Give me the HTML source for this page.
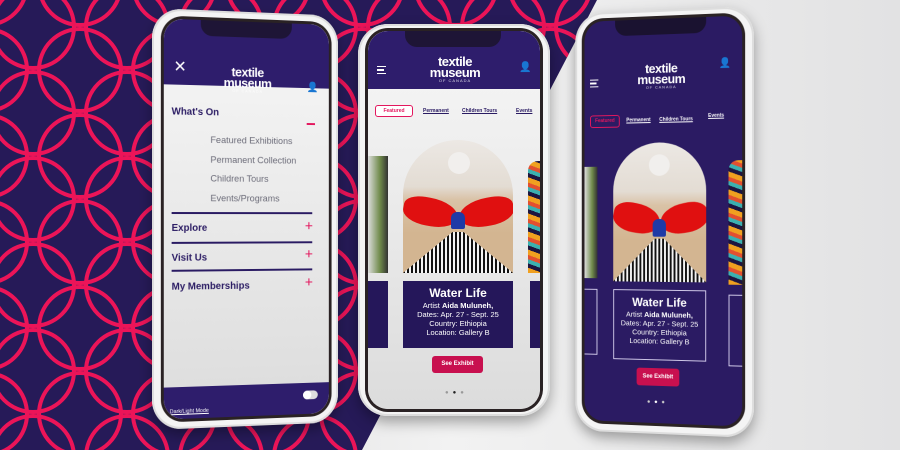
<!DOCTYPE html>
<html><head><meta charset="utf-8"><style>
*{margin:0;padding:0;box-sizing:border-box}
body{width:900px;height:450px;overflow:hidden;position:relative;font-family:"Liberation Sans",sans-serif;background:#e9e9ea}
.abs{position:absolute}
.phone{position:absolute;background:#f4f4f4;border-radius:30px;box-shadow:0 6px 14px rgba(0,0,0,.35),inset 0 0 0 2px #ddd}
.screen{position:absolute;overflow:hidden;border-radius:20px;background:linear-gradient(180deg,#f7f7f7,#dcdcdc);box-shadow:0 0 0 3px #2a2224}
.notch{position:absolute;height:16px;background:#1e1536;border-radius:0 0 12px 12px;top:0}
.logo{position:absolute;color:#fff;font-weight:bold;text-align:center;line-height:11px;font-size:13px;letter-spacing:-.5px}
.logo small{display:block;font-size:4px;font-weight:normal;letter-spacing:1px;line-height:6px;opacity:.8}
.tab{position:absolute;font-size:5px;font-weight:bold;text-decoration:underline}
.arch{position:absolute;border-radius:60px 60px 0 0;overflow:hidden;background:linear-gradient(180deg,#ece8e4 0,#e3dcd3 35%,#d9c2a6 45%,#d3b591 70%)}
.card{position:absolute;color:#fff;text-align:center;font-size:7.5px;line-height:9px}
.card b.t{display:block;font-size:12px;line-height:16px;margin-top:4px}
.btn{position:absolute;background:#c8104f;color:#fff;font-size:6px;font-weight:bold;text-align:center;border-radius:3px}
</style></head><body>
<svg class="abs" style="left:0;top:0" width="900" height="450">
<defs>
<linearGradient id="g" x1="0" x2="1"><stop offset="0" stop-color="#d4d4d6"/><stop offset=".5" stop-color="#f2f2f2"/><stop offset="1" stop-color="#e2e2e3"/></linearGradient>
<pattern id="p" width="94" height="86" patternUnits="userSpaceOnUse" x="33" y="27">
<g fill="none" stroke="#ec1458" stroke-width="4">
<circle cx="0" cy="0" r="41"/><circle cx="94" cy="0" r="41"/><circle cx="0" cy="86" r="41"/><circle cx="94" cy="86" r="41"/><circle cx="47" cy="43" r="41"/>
</g></pattern>
<clipPath id="c"><polygon points="0,0 597,0 362,450 0,450"/></clipPath>
</defs>
<rect width="900" height="450" fill="url(#g)"/>
<g clip-path="url(#c)"><rect width="900" height="450" fill="#261a58"/><rect width="900" height="450" fill="url(#p)"/></g>
</svg>

<!-- phone 1 -->
<div class="phone" style="left:152px;top:8px;width:196px;height:422px;transform:perspective(900px) rotateY(10deg);transform-origin:left center">
 <div class="screen" style="left:12px;top:10px;width:174px;height:402px">
  <div class="abs" style="left:0;top:0;width:174px;height:66px;background:#2e1d6c"></div>
  <div class="notch" style="left:38px;width:96px"></div>
  <div class="abs" style="left:10px;top:38px;color:#fff;font-size:16px">✕</div>
  <div class="logo" style="left:52px;top:46px;width:70px">textile<br>museum<small>OF CANADA</small></div>
  <div class="abs" style="left:150px;top:60px;color:#fff;font-size:10px">👤</div>
  <div class="abs" style="left:8px;top:88px;font-size:10px;font-weight:bold;color:#2a1b63">What's On</div>
  <div class="abs" style="left:150px;top:102px;width:9px;height:2px;background:#e3175e"></div>
  <div class="abs" style="left:48px;top:112px;font-size:9.5px;line-height:19.5px;color:#6b6b78">Featured Exhibitions<br>Permanent Collection<br>Children Tours<br>Events/Programs</div>
  <div class="abs" style="left:8px;top:194px;width:148px;height:1.5px;background:#2a1b63"></div>
  <div class="abs" style="left:8px;top:205px;font-size:10px;font-weight:bold;color:#2a1b63">Explore</div>
  <div class="abs" style="left:8px;top:224px;width:148px;height:1.5px;background:#2a1b63"></div>
  <div class="abs" style="left:8px;top:235px;font-size:10px;font-weight:bold;color:#2a1b63">Visit Us</div>
  <div class="abs" style="left:8px;top:252px;width:148px;height:1.5px;background:#2a1b63"></div>
  <div class="abs" style="left:8px;top:264px;font-size:10px;font-weight:bold;color:#2a1b63">My Memberships</div>
  <div class="abs" style="left:148px;top:200px;color:#e3175e;font-size:15px">+</div>
  <div class="abs" style="left:148px;top:229px;color:#e3175e;font-size:15px">+</div>
  <div class="abs" style="left:148px;top:258px;color:#e3175e;font-size:15px">+</div>
  <div class="abs" style="left:0;top:370px;width:174px;height:40px;background:#2e1d6c"></div>
  <div class="abs" style="left:6px;top:392px;color:#fff;font-size:5.5px;text-decoration:underline">Dark/Light Mode</div>
  <div class="abs" style="left:146px;top:378px;width:16px;height:9px;border-radius:5px;background:#ddd"><div style="width:9px;height:9px;border-radius:50%;background:#fff"></div></div>
 </div>
</div>

<!-- phone 2 -->
<div class="phone" style="left:358px;top:24px;width:192px;height:392px">
 <div class="screen" style="left:10px;top:7px;width:172px;height:378px">
  <div class="abs" style="left:0;top:0;width:172px;height:58px;background:#2e1d6c"></div>
  <div class="notch" style="left:37px;width:96px"></div>
  <div class="abs" style="left:9px;top:35px;width:9px;height:8px;border-top:1.5px solid #fff;border-bottom:1.5px solid #fff"><div style="margin-top:2px;width:7px;height:1.5px;background:#fff"></div></div>
  <div class="logo" style="left:52px;top:25px;width:70px">textile<br>museum<small>OF CANADA</small></div>
  <div class="abs" style="left:151px;top:31px;color:#fff;font-size:10px">👤</div>
  <div class="abs" style="left:7px;top:74px;width:38px;height:12px;border:1px solid #e3175e;border-radius:3px;background:#fff;color:#e3175e;font-size:5px;font-weight:bold;text-align:center;line-height:10px">Featured</div>
  <div class="tab" style="left:55px;top:77px;color:#2a1b63">Permanent</div>
  <div class="tab" style="left:94px;top:77px;color:#2a1b63">Children Tours</div>
  <div class="tab" style="left:148px;top:77px;color:#2a1b63">Events</div>
  <div class="abs" style="left:0;top:125px;width:20px;height:117px;background:linear-gradient(90deg,#ddd,#6f8a4a 60%,#333)"></div>
  <div class="abs" style="left:160px;top:130px;width:12px;height:112px;background:repeating-linear-gradient(20deg,#f0a020 0 5px,#1c1540 5px 9px,#3bb0b0 9px 13px,#e25030 13px 17px);border-radius:10px 0 0 0"></div>
  <div class="arch" style="left:35px;top:109px;width:110px;height:133px">
   <div class="abs" style="left:45px;top:12px;width:22px;height:22px;border-radius:50%;background:#f1efed"></div>
   <div class="abs" style="left:0;top:58px;width:55px;height:28px;background:#e01010;border-radius:40% 60% 50% 50%;transform:rotate(10deg)"></div>
   <div class="abs" style="left:56px;top:58px;width:55px;height:28px;background:#e01010;border-radius:60% 40% 50% 50%;transform:rotate(-10deg)"></div>
   <div class="abs" style="left:48px;top:72px;width:14px;height:17px;background:#1f3aa6;border-radius:6px 6px 2px 2px"></div>
   <div class="abs" style="left:0;top:92px;width:110px;height:41px;background:repeating-linear-gradient(90deg,#111 0 2px,#f4f4f4 2px 4px);clip-path:polygon(45% 0,55% 0,100% 100%,0 100%)"></div>
  </div>
  <div class="abs" style="left:0;top:250px;width:20px;height:67px;background:#25175a"></div>
  <div class="abs" style="left:162px;top:250px;width:10px;height:67px;background:#25175a"></div>
  <div class="card" style="left:35px;top:250px;width:110px;height:67px;background:#25175a"><b class="t">Water Life</b>Artist <b>Aida Muluneh,</b><br>Dates: Apr. 27 - Sept. 25<br>Country: Ethiopia<br>Location: Gallery B</div>
  <div class="btn" style="left:64px;top:325px;width:51px;height:17px;line-height:17px">See Exhibit</div>
  <div class="abs" style="left:77px;top:359px;font-size:6px;color:#999;letter-spacing:4px">●<span style="color:#222">●</span>●</div>
 </div>
</div>

<!-- phone 3 -->
<div class="phone" style="left:566px;top:6px;width:188px;height:432px;transform:perspective(900px) rotateY(-10deg);transform-origin:right center">
 <div class="screen" style="left:10px;top:9px;width:166px;height:412px;background:#2b1b63">
  <div class="notch" style="left:33px;width:96px;background:#1a1230"></div>
  <div class="abs" style="left:6px;top:60px;width:9px;height:8px;border-top:1.5px solid #fff;border-bottom:1.5px solid #fff"><div style="margin-top:2px;width:7px;height:1.5px;background:#fff"></div></div>
  <div class="logo" style="left:47px;top:45px;width:70px">textile<br>museum<small>OF CANADA</small></div>
  <div class="abs" style="left:142px;top:42px;color:#fff;font-size:10px">👤</div>
  <div class="abs" style="left:6px;top:97px;width:32px;height:13px;border:1px solid #e3175e;border-radius:3px;color:#e3175e;font-size:5px;font-weight:bold;text-align:center;line-height:11px">Featured</div>
  <div class="tab" style="left:45px;top:100px;color:#fff">Permanent</div>
  <div class="tab" style="left:80px;top:100px;color:#fff">Children Tours</div>
  <div class="tab" style="left:131px;top:97px;color:#fff">Events</div>
  <div class="abs" style="left:0;top:150px;width:14px;height:115px;background:linear-gradient(90deg,#ddd,#6f8a4a 60%,#333)"></div>
  <div class="abs" style="left:152px;top:145px;width:14px;height:125px;background:repeating-linear-gradient(20deg,#f0a020 0 5px,#1c1540 5px 9px,#3bb0b0 9px 13px,#e25030 13px 17px);border-radius:10px 0 0 0"></div>
  <div class="arch" style="left:31px;top:126px;width:98px;height:142px">
   <div class="abs" style="left:38px;top:12px;width:22px;height:22px;border-radius:50%;background:#f1efed"></div>
   <div class="abs" style="left:0;top:62px;width:50px;height:30px;background:#e01010;border-radius:40% 60% 50% 50%;transform:rotate(10deg)"></div>
   <div class="abs" style="left:50px;top:62px;width:50px;height:30px;background:#e01010;border-radius:60% 40% 50% 50%;transform:rotate(-10deg)"></div>
   <div class="abs" style="left:42px;top:78px;width:14px;height:18px;background:#1f3aa6;border-radius:6px 6px 2px 2px"></div>
   <div class="abs" style="left:0;top:98px;width:98px;height:44px;background:repeating-linear-gradient(90deg,#111 0 2px,#f4f4f4 2px 4px);clip-path:polygon(45% 0,55% 0,100% 100%,0 100%)"></div>
  </div>
  <div class="card" style="left:31px;top:276px;width:98px;height:72px;border:1px solid #cfc8e8"><b class="t">Water Life</b>Artist <b>Aida Muluneh,</b><br>Dates: Apr. 27 - Sept. 25<br>Country: Ethiopia<br>Location: Gallery B</div>
  <div class="abs" style="left:0;top:276px;width:14px;height:68px;border:1px solid #cfc8e8;border-left:0"></div>
  <div class="abs" style="left:152px;top:280px;width:14px;height:72px;border:1px solid #cfc8e8;border-right:0"></div>
  <div class="btn" style="left:56px;top:356px;width:45px;height:18px;line-height:18px">See Exhibit</div>
  <div class="abs" style="left:67px;top:388px;font-size:6px;color:#ccc;letter-spacing:4px">●<span style="color:#fff">●</span>●</div>
 </div>
</div>
</body></html>
